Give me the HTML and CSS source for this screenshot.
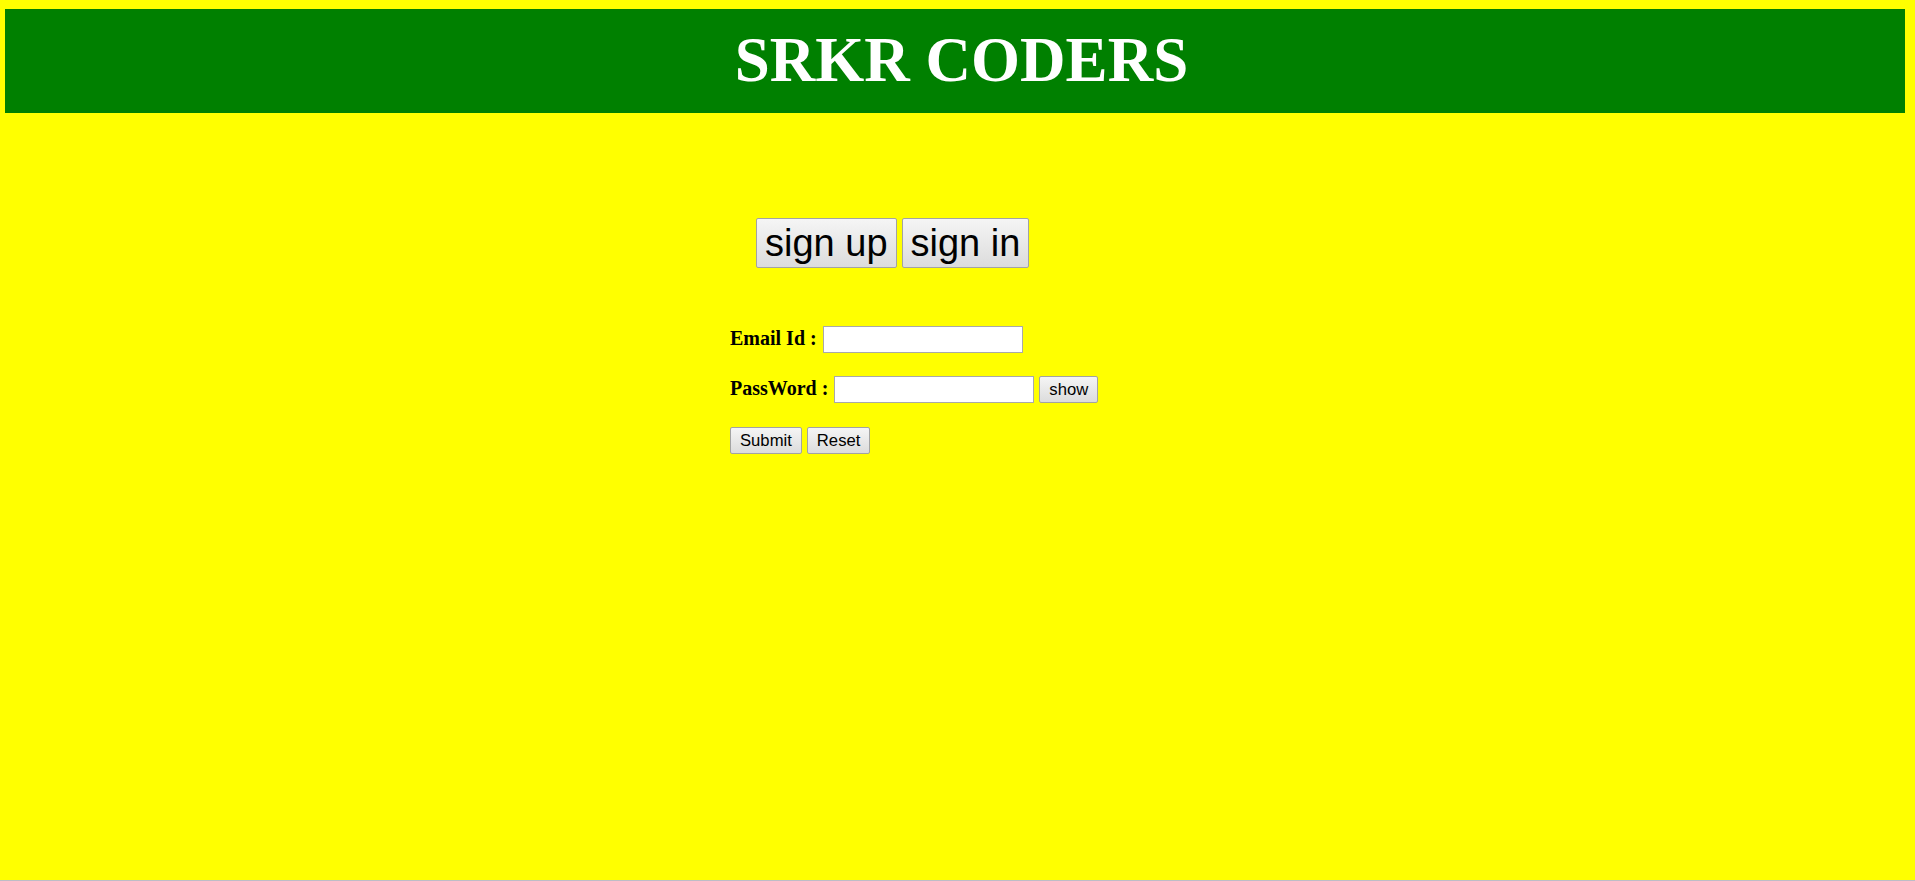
FILE: index.html
```html
<!DOCTYPE html>
<html>
<head>
<meta charset="utf-8">
<title>SRKR CODERS</title>
<link rel="stylesheet" href="styles.css">
</head>
<body>
<div class="page">
  <header class="banner">
    <h1 class="title">SRKR CODERS</h1>
  </header>
  <main class="auth">
    <div class="tabs">
      <button class="tab">sign up</button>
      <button class="tab">sign in</button>
    </div>
    <form class="form">
      <div class="row">
        <label class="label">Email Id :</label>
        <input class="field" type="text">
      </div>
      <div class="row">
        <label class="label">PassWord :</label>
        <input class="field" type="password">
        <button type="button" class="btn">show</button>
      </div>
      <div class="row actions">
        <button type="button" class="btn">Submit</button>
        <button type="reset" class="btn">Reset</button>
      </div>
    </form>
  </main>
</div>
</body>
</html>
```
FILE: styles.css
```css
html, body {
  margin: 0;
  padding: 0;
}
body {
  background: #ffff00;
  font-family: "Liberation Serif", "Times New Roman", serif;
}
.page {
  min-height: 100vh;
  box-sizing: border-box;
  border-bottom: 1px solid #bdbdc6;
  display: flex;
  flex-direction: column;
}
.banner {
  margin: 9px 10px 0 5px;
  height: 104px;
  box-sizing: border-box;
  background: #008000;
  padding: 15px 0 0 13px;
  text-align: center;
}
.title {
  margin: 0;
  font-family: "Liberation Serif", "Times New Roman", serif;
  font-weight: bold;
  font-size: 63px;
  line-height: 72px;
  color: #ffffff;
}
.auth {
  margin-left: 730px;
  padding-top: 105px;
  display: flex;
  flex-direction: column;
}
.tabs {
  display: flex;
  gap: 5px;
  padding-left: 26px;
}
.tab, .btn {
  font-family: "Liberation Sans", Arial, sans-serif;
  color: #000;
  background: linear-gradient(#f5f5f5, #dcdcdc);
  border: 1px solid #a3a3a3;
  border-radius: 2px;
  margin: 0;
  cursor: pointer;
}
.tab {
  font-size: 38px;
  height: 50px;
  padding: 0 8px;
  line-height: 44px;
}
.form {
  margin-top: 58px;
  display: flex;
  flex-direction: column;
}
.row {
  display: flex;
  align-items: center;
  gap: 5px;
  height: 27px;
  margin-bottom: 23px;
}
.row.actions {
  margin-top: 1px;
}
.label {
  font-weight: bold;
  font-size: 20px;
  line-height: 23px;
  padding-bottom: 2px;
  margin-right: 1px;
}
.field {
  width: 200px;
  height: 27px;
  box-sizing: border-box;
  border: 1px solid #a9a9a9;
  background: #fff;
  margin: 0;
  padding: 2px 3px;
  font-family: "Liberation Sans", Arial, sans-serif;
  font-size: 16.67px;
}
.btn {
  font-size: 16.67px;
  height: 27px;
  padding: 0 9px;
  line-height: 25px;
}
```
